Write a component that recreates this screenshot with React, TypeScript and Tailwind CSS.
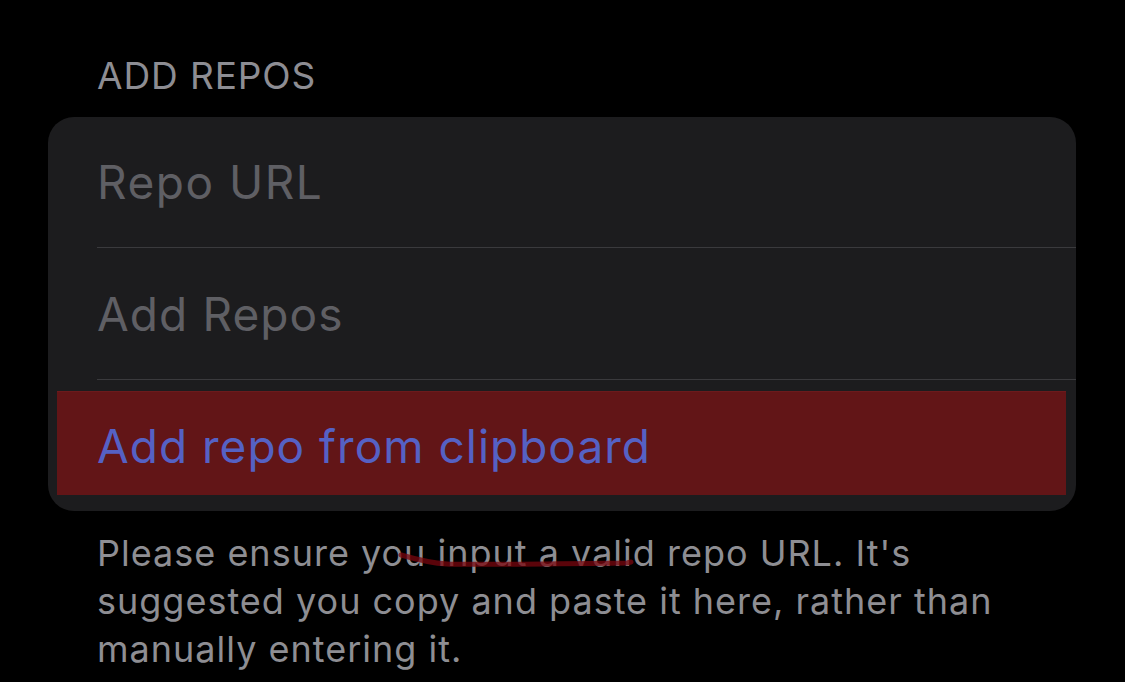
export default function App() {
  return (
    <div className="h-[682px] w-[1125px] overflow-hidden bg-black font-['Inter','Liberation_Sans',sans-serif]">
      <div className="pl-[97px] pt-[56px] text-[37px] leading-[40px] tracking-[0.9px] text-[#8d8d93]">
        ADD REPOS
      </div>

      <div className="ml-[48px] mr-[49px] mt-[21px] overflow-hidden rounded-[26px] bg-[#1c1c1e]">
        <div className="flex h-[130px] items-center pl-[49px] text-[46px] tracking-[1.5px] text-[#5f5f64]">
          Repo URL
        </div>
        <div className="ml-[49px] h-px bg-[#3a3a3d]" />
        <div className="flex h-[131px] items-center pl-[49px] pt-[2px] text-[46px] tracking-[1.1px] text-[#5f5f64]">
          Add Repos
        </div>
        <div className="ml-[49px] h-px bg-[#3a3a3d]" />
        <div className="h-[131px] pb-[16px] pl-[9px] pr-[10px] pt-[11px]">
          <div className="flex h-full items-center border-t border-[#6c1a1c] bg-[#621517] pl-[40px] pt-[6px] text-[46px] tracking-[1px] text-[#5561c4]">
            Add repo from clipboard
          </div>
        </div>
      </div>

      <div className="relative pl-[97px] pt-[18px] text-[36px] leading-[48px] tracking-[1px] text-[#8e8e93]">
        <p>
          Please ensure you input a valid repo URL. It's
          <br />
          suggested you copy and paste it here, rather than
          <br />
          manually entering it.
        </p>
        <svg className="absolute left-[397px] top-[40px]" width="240" height="18" viewBox="0 0 240 18">
          <path
            d="M4 4 C 18 8, 32 12, 50 13 S 150 13, 230 12 L 234 11"
            stroke="rgba(120,6,14,0.75)"
            strokeWidth="5"
            fill="none"
            strokeLinecap="round"
          />
        </svg>
      </div>
    </div>
  );
}
